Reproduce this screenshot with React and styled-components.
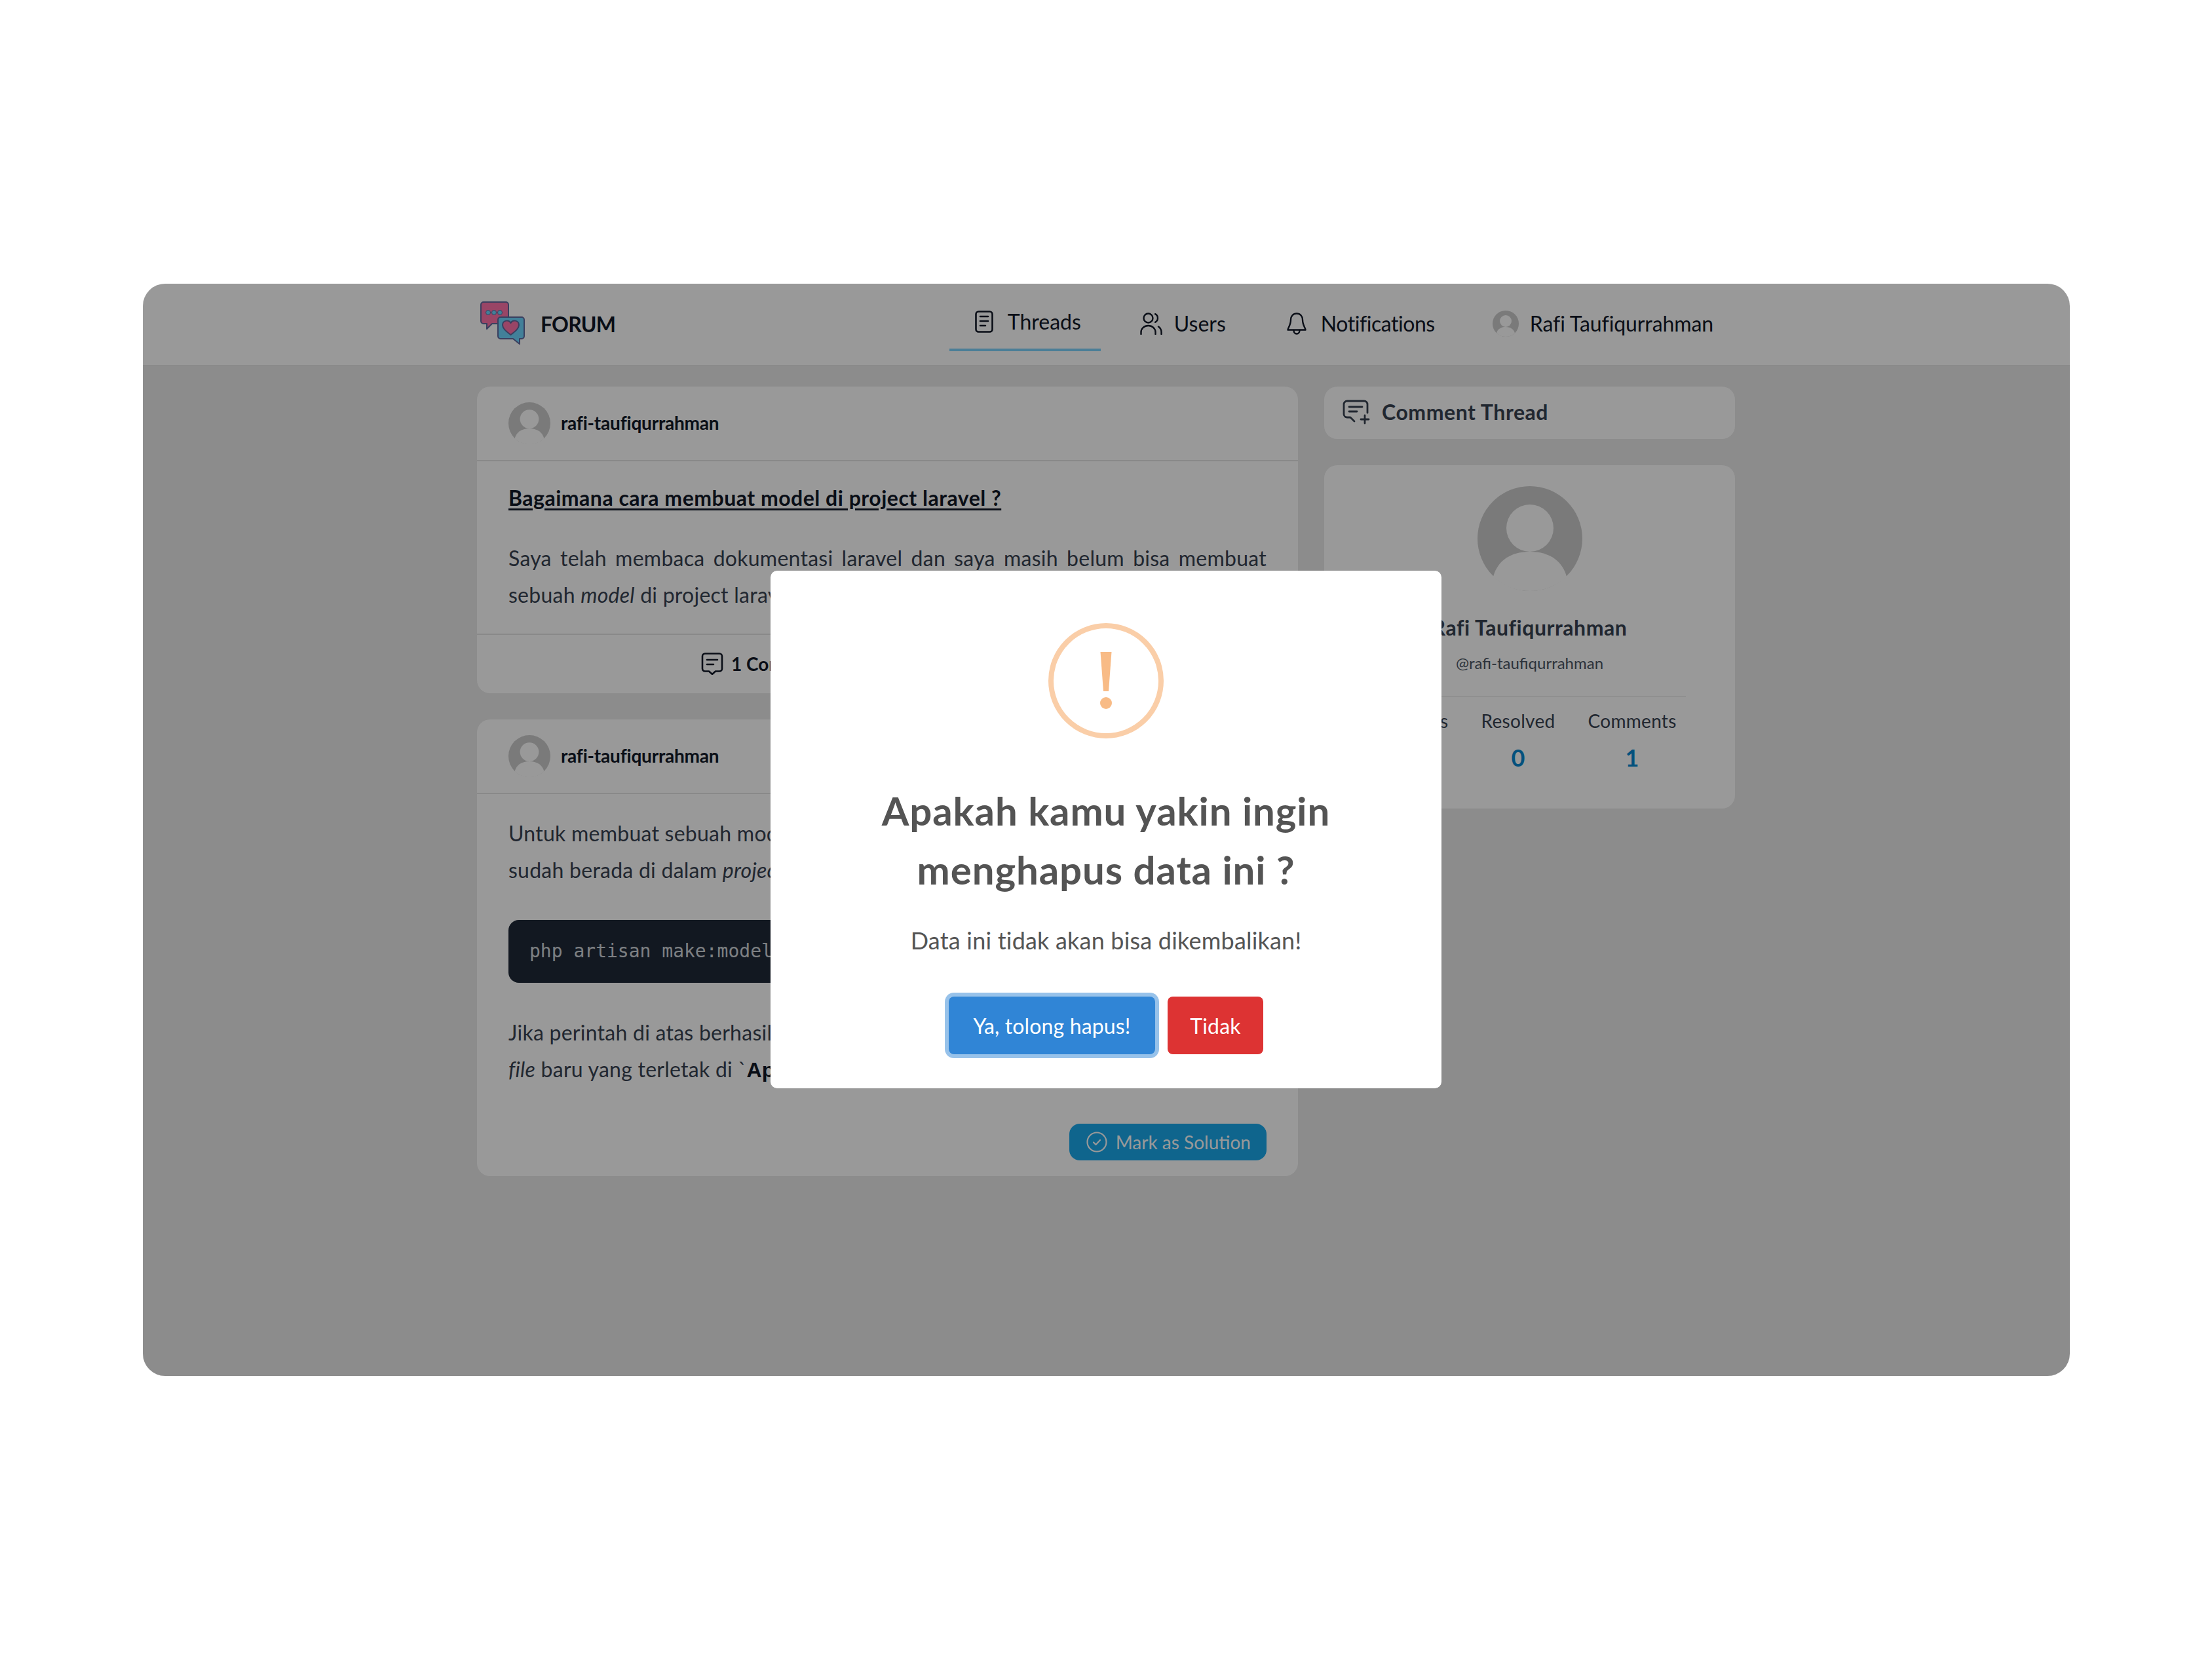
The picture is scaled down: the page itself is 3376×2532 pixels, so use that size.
import React from 'react';
import styled, { createGlobalStyle } from 'styled-components';

const Global = createGlobalStyle`
  * { box-sizing: border-box; }
  html, body { margin: 0; padding: 0; background: #fff; }
  body { font-family: "Lato", "Noto Sans", sans-serif; color: #374151; }
`;

const Page = styled.div`
  width: 100%;
  height: 100vh;
  display: flex;
  align-items: center;
  justify-content: center;
`;

const AppWindow = styled.div`
  position: relative;
  width: 2941px;
  height: 1667px;
  background: #e9e9e9;
  border-radius: 34px;
  overflow: hidden;
`;

const NavBar = styled.header`
  height: 126px;
  background: #fff;
  border-bottom: 2px solid #e6e6e6;
  display: flex;
  justify-content: center;
`;

const NavInner = styled.div`
  width: 1920px;
  display: flex;
  align-items: center;
  justify-content: space-between;
  padding: 0 13px 0 5px;
`;

const Brand = styled.div`
  display: flex;
  align-items: center;
  gap: 22px;
  font-size: 32px;
  font-weight: 700;
  letter-spacing: -0.8px;
  color: #111827;

  svg {
    margin-bottom: 4px;
  }
`;

const NavLinks = styled.nav`
  display: flex;
  align-items: stretch;
  height: 82px;
  gap: 20px;
`;

const NavLink = styled.a`
  display: flex;
  align-items: center;
  gap: ${(p) => p.$gap || 20}px;
  padding: 0 ${(p) => p.$pr || 20}px 0 ${(p) => p.$pl || 40}px;
  padding-bottom: ${(p) => (p.$active ? 4 : 2)}px;
  font-size: 32px;
  letter-spacing: ${(p) => p.$ls || 0}px;
  color: #111827;
  border-bottom: ${(p) => (p.$active ? '4px solid #7dd3fc' : '0')};
`;

const Main = styled.main`
  width: 1920px;
  margin: 31px auto 0;
  display: grid;
  grid-template-columns: 1253px 627px;
  gap: 40px;
  align-items: start;
`;

const Column = styled.div`
  display: flex;
  flex-direction: column;
  gap: 40px;
`;

const Card = styled.section`
  background: #fff;
  border-radius: 20px;
  overflow: hidden;
`;

const CardHeader = styled.div`
  display: flex;
  align-items: center;
  gap: 16px;
  padding: 24px 48px;
  border-bottom: 2px solid #e5e5e5;
  font-size: 28px;
  font-weight: 700;
  letter-spacing: -0.2px;
  color: #111827;
`;

const Username = styled.span`
  margin-bottom: 2px;
`;

const CardBody = styled.div`
  padding: ${(p) => p.$top}px 48px ${(p) => p.$bottom}px;
`;

const ThreadTitle = styled.a`
  display: block;
  margin-bottom: 44px;
  font-size: 32px;
  line-height: 40px;
  font-weight: 700;
  letter-spacing: 0.5px;
  color: #111827;
  text-decoration: underline;
  text-underline-offset: 4px;
`;

const Paragraph = styled.p`
  margin: 0;
  font-size: 32px;
  line-height: 56px;
  letter-spacing: 0.25px;
  color: #374151;
  text-align: justify;
`;

const CodeBlock = styled.pre`
  margin: 48px 0;
  height: 96px;
  padding: 0 32px;
  display: flex;
  align-items: center;
  border-radius: 16px;
  background: #1f2937;
  color: #d1d5db;
  font-family: "DejaVu Sans Mono", monospace;
  font-size: 28px;
`;

const InlinePath = styled.code`
  font-family: "Liberation Sans", sans-serif;
  font-weight: 700;
  color: #111827;
`;

const CardFooter = styled.div`
  display: flex;
  align-items: center;
  gap: 12px;
  height: 91px;
  padding-left: 342px;
  border-top: 2px solid #e5e5e5;
  font-size: 28px;
  font-weight: 700;
  color: #111827;
`;

const SolutionRow = styled.div`
  display: flex;
  justify-content: flex-end;
  margin-top: 54px;
`;

const SolutionButton = styled.button`
  display: flex;
  align-items: center;
  gap: 13px;
  height: 56px;
  padding: 0 24px 0 26px;
  border: 0;
  border-radius: 16px;
  background: #1aa9ec;
  color: #fff;
  font-family: inherit;
  font-size: 28px;
`;

const SideHeading = styled.div`
  height: 80px;
  display: flex;
  align-items: center;
  gap: 18px;
  padding: 0 28px 2px;
  font-size: 32px;
  font-weight: 700;
  letter-spacing: 0.55px;
  color: #374151;
`;

const Profile = styled.div`
  height: 524px;
  padding-top: 32px;
  display: flex;
  flex-direction: column;
  align-items: center;
`;

const ProfileName = styled.div`
  margin-top: 36px;
  font-size: 32px;
  line-height: 40px;
  font-weight: 700;
  letter-spacing: 0.55px;
  color: #374151;
`;

const ProfileHandle = styled.div`
  margin-top: 18px;
  font-size: 24px;
  line-height: 32px;
  color: #4b5563;
`;

const StatsRow = styled.div`
  width: 476px;
  margin-top: 34px;
  padding-top: 18px;
  border-top: 2px solid #efefef;
  display: flex;
  justify-content: center;
  gap: 50px;
`;

const Stat = styled.div`
  display: flex;
  flex-direction: column;
  align-items: center;
  font-size: 28px;
  line-height: 36px;
  letter-spacing: 0.3px;
  color: #374151;
`;

const StatValue = styled.div`
  margin-top: 18px;
  font-size: 36px;
  line-height: 40px;
  font-weight: 700;
  color: #0788d0;
`;

const Overlay = styled.div`
  position: absolute;
  inset: 0;
  background: rgba(0, 0, 0, 0.4);
  display: flex;
  align-items: center;
  justify-content: center;
`;

const Modal = styled.div`
  width: 1024px;
  height: 790px;
  padding-top: 80px;
  background: #fff;
  border-radius: 10px;
  display: flex;
  flex-direction: column;
  align-items: center;
  color: #545454;
`;

const ModalTitle = styled.h2`
  margin: 65px 0 0;
  width: 800px;
  text-align: center;
  font-size: 60px;
  line-height: 90px;
  font-weight: 700;
  letter-spacing: 0.9px;
`;

const ModalText = styled.div`
  margin-top: 40px;
  font-size: 36px;
  line-height: 46px;
  letter-spacing: 0.2px;
`;

const ModalActions = styled.div`
  margin-top: 63px;
  display: flex;
  gap: 19px;
`;

const ModalButton = styled.button`
  width: ${(p) => p.$w}px;
  height: 88px;
  padding: 0;
  border: 0;
  border-radius: 8px;
  background: ${(p) => p.$bg};
  box-shadow: ${(p) => (p.$focus ? '0 0 0 6px rgba(48, 133, 214, 0.5)' : 'none')};
  color: #fff;
  font-family: inherit;
  font-size: 32px;
  letter-spacing: 0.15px;
`;

const ThreadsIcon = () => (
  <svg width="28" height="34" viewBox="0 0 28 34" fill="none" stroke="#111827" strokeWidth="2.6" strokeLinecap="round">
    <rect x="1.5" y="1.5" width="25" height="31" rx="4" />
    <path d="M8 9h12M8 16h12M8 23h8" />
  </svg>
);

const UsersIcon = () => (
  <svg width="34" height="34" viewBox="0 0 34 34" fill="none" stroke="#111827" strokeWidth="2.4" strokeLinecap="round">
    <circle cx="12.5" cy="8.5" r="7" />
    <path d="M1.5 33v-3a11 10 0 0 1 22 0v3" />
    <path d="M23 2.2a7 7 0 0 1 0 12.6" />
    <path d="M28 21.5a10 10 0 0 1 4.5 8.5v3" />
  </svg>
);

const BellIcon = () => (
  <svg width="30" height="34" viewBox="0 0 30 34" fill="none" stroke="#111827" strokeWidth="2.4" strokeLinecap="round" strokeLinejoin="round">
    <path d="M15 1.5c-5.5 0-9 4.2-9 9.5 0 8-4.5 13-4.5 15.5h27C28.500 24 24 19 24 11c0-5.300-3.500-9.500-9-9.500z" />
    <path d="M10.500 27a4.500 5.500 0 0 0 9 0" />
  </svg>
);

const CommentIcon = () => (
  <svg width="34" height="34" viewBox="0 0 34 34" fill="none" stroke="#111827" strokeWidth="2.6" strokeLinecap="round" strokeLinejoin="round">
    <path d="M6 1.500h22a4 4 0 0 1 4 4v19a4 4 0 0 1-4 4h-6l-5 4.500-5-4.500H6a4 4 0 0 1-4-4v-19a4 4 0 0 1 4-4z" />
    <path d="M9 11h16M9 18h10" />
  </svg>
);

const CommentPlusIcon = () => (
  <svg width="42" height="38" viewBox="0 0 42 38" fill="none" stroke="#374151" strokeWidth="2.8" strokeLinecap="round" strokeLinejoin="round">
    <path d="M38 20V7a5 5 0 0 0-5-5H7a5 5 0 0 0-5 5v15a5 5 0 0 0 5 5h5l6 6" />
    <path d="M10 11h20M10 18h12" />
    <path d="M34 24v12M28 30h12" />
  </svg>
);

const CheckIcon = () => (
  <svg width="32" height="32" viewBox="0 0 32 32" fill="none" stroke="#fff" strokeWidth="2.200" strokeLinecap="round" strokeLinejoin="round">
    <circle cx="16" cy="16" r="14.500" />
    <path d="M11 16.500l3.500 3.500 6.500-7" />
  </svg>
);

const Avatar = ({ size }) => (
  <svg width={size} height={size} viewBox="0 0 160 160">
    <circle cx="80" cy="80" r="80" fill="#cbcbcb" />
    <circle cx="80" cy="64" r="36" fill="#fff" />
    <path d="M24 138c6-22 24-38 56-38s50 16 56 38c-15 14-34 22-56 22s-41-8-56-22z" fill="#fff" />
  </svg>
);

const Logo = () => (
  <svg width="70" height="66" viewBox="0 0 70 66" strokeLinejoin="round">
    <path d="M5 1h34a4 4 0 0 1 4 4v25a4 4 0 0 1-4 4H18l-8 8v-8H5a4 4 0 0 1-4-4V5a4 4 0 0 1 4-4z" fill="#ff73aa" stroke="#62699f" strokeWidth="2" />
    <circle cx="12" cy="17" r="3.500" fill="#6ed5ff" stroke="#62699f" />
    <circle cx="21" cy="17" r="3.500" fill="#6ed5ff" stroke="#62699f" />
    <circle cx="30" cy="17" r="3.500" fill="#6ed5ff" stroke="#62699f" />
    <path d="M31 24h32a4 4 0 0 1 4 4v25a4 4 0 0 1-4 4h-3v8l-10-8H31a4 4 0 0 1-4-4V28a4 4 0 0 1 4-4z" fill="#6ed5ff" stroke="#62699f" strokeWidth="2" />
    <path d="M46.500 51c-8-6-12.500-10-12.500-15 0-7 9.500-9 12.500-3 3-6 12.500-4 12.500 3 0 5-4.500 9-12.500 15z" fill="#ff73aa" stroke="#62699f" strokeWidth="2" />
  </svg>
);

const WarningIcon = () => (
  <svg width="176" height="176" viewBox="0 0 176 176">
    <circle cx="88" cy="88" r="84" fill="none" stroke="#facea8" strokeWidth="8" />
    <path d="M79.500 44h17L92 104h-8z" fill="#f8bb86" />
    <circle cx="88" cy="122" r="9" fill="#f8bb86" />
  </svg>
);

const App = () => (
  <Page>
    <Global />
    <AppWindow>
      <NavBar>
        <NavInner>
          <Brand>
            <Logo />
            FORUM
          </Brand>
          <NavLinks>
            <NavLink $active $gap={22} $pl={39} $pr={30}><ThreadsIcon />Threads</NavLink>
            <NavLink $gap={18}><UsersIcon />Users</NavLink>
            <NavLink $gap={22} $pl={53} $pr={28} $ls={-0.45}><BellIcon />Notifications</NavLink>
            <NavLink $gap={17} $ls={-0.1}><Avatar size={40} />Rafi Taufiqurrahman</NavLink>
          </NavLinks>
        </NavInner>
      </NavBar>
      <Main>
        <Column>
          <Card>
            <CardHeader><Avatar size={64} /><Username>rafi-taufiqurrahman</Username></CardHeader>
            <CardBody $top={36} $bottom={31}>
              <ThreadTitle>Bagaimana cara membuat model di project laravel ?</ThreadTitle>
              <Paragraph>
                Saya telah membaca dokumentasi laravel dan saya masih belum bisa membuat sebuah <em>model</em> di project laravel saya.
              </Paragraph>
            </CardBody>
            <CardFooter><CommentIcon />1 Comment</CardFooter>
          </Card>
          <Card>
            <CardHeader><Avatar size={64} /><Username>rafi-taufiqurrahman</Username></CardHeader>
            <CardBody $top={32} $bottom={24}>
              <Paragraph>
                Untuk membuat sebuah model, pastikan terminal kamu<br />
                sudah berada di dalam <em>project</em> laravel, lalu jalankan perintah ini.
              </Paragraph>
              <CodeBlock>php artisan make:model Post</CodeBlock>
              <Paragraph>
                Jika perintah di atas berhasil dijalankan, maka akan muncul<br />
                <em>file</em> baru yang terletak di `<InlinePath>App/Models</InlinePath>`.
              </Paragraph>
              <SolutionRow>
                <SolutionButton><CheckIcon />Mark as Solution</SolutionButton>
              </SolutionRow>
            </CardBody>
          </Card>
        </Column>
        <Column>
          <Card>
            <SideHeading><CommentPlusIcon />Comment Thread</SideHeading>
          </Card>
          <Card>
            <Profile>
              <Avatar size={160} />
              <ProfileName>Rafi Taufiqurrahman</ProfileName>
              <ProfileHandle>@rafi-taufiqurrahman</ProfileHandle>
              <StatsRow>
                <Stat>Threads<StatValue>1</StatValue></Stat>
                <Stat>Resolved<StatValue>0</StatValue></Stat>
                <Stat>Comments<StatValue>1</StatValue></Stat>
              </StatsRow>
            </Profile>
          </Card>
        </Column>
      </Main>
      <Overlay>
        <Modal>
          <WarningIcon />
          <ModalTitle>Apakah kamu yakin ingin menghapus data ini ?</ModalTitle>
          <ModalText>Data ini tidak akan bisa dikembalikan!</ModalText>
          <ModalActions>
            <ModalButton $focus $bg="#3085d6" $w={315}>Ya, tolong hapus!</ModalButton>
            <ModalButton $bg="#dd3333" $w={146}>Tidak</ModalButton>
          </ModalActions>
        </Modal>
      </Overlay>
    </AppWindow>
  </Page>
);

export default App;
